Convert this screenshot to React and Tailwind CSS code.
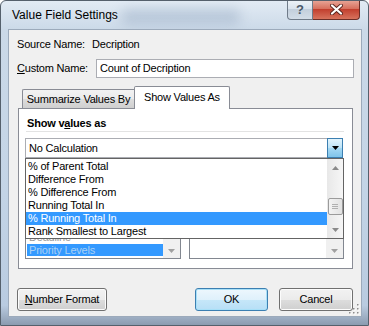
import React from 'react'

const FONT = { fontFamily: '"Liberation Sans", Arial, sans-serif' }

const items = [
  '% of Parent Total',
  'Difference From',
  '% Difference From',
  'Running Total In',
  '% Running Total In',
  'Rank Smallest to Largest',
]

function Tri({ dir = 'down', color = '#000', w = 7, h = 4 }) {
  const d = dir === 'down' ? `M0 0 L${w} 0 L${w / 2} ${h} Z` : `M0 ${h} L${w} ${h} L${w / 2} 0 Z`
  return (
    <svg width={w} height={h} viewBox={`0 0 ${w} ${h}`}>
      <path d={d} fill={color} />
    </svg>
  )
}

function Button({ children, primary, className = '' }) {
  return (
    <div
      className={`h-[23px] flex items-center justify-center rounded-[3px] border text-[11px] tracking-[-0.2px] text-black ${
        primary
          ? 'border-[#3c7fb1] bg-[linear-gradient(180deg,#edf7fd_0%,#dff1fb_50%,#c6e7f9_51%,#b7dff6_100%)] shadow-[inset_0_0_0_1px_#a8e0f8]'
          : 'border-[#707070] bg-[linear-gradient(180deg,#f2f2f2_0%,#ebebeb_50%,#dddddd_51%,#cfcfcf_100%)] shadow-[inset_0_0_0_1px_#fcfcfc]'
      } ${className}`}
    >
      {children}
    </div>
  )
}

export default function App() {
  return (
    <div
      style={FONT}
      className="relative w-[369px] h-[326px] overflow-hidden flex flex-col border border-[#55606c] rounded-t-[6px] bg-[linear-gradient(180deg,#e2ebf4_0%,#cbd9e8_9%,#c3d4e6_60%,#b9cbe0_94%,#8b9bb0_100%)]"
    >
      {/* Title bar */}
      <div className="relative h-[28px] flex items-center pl-[11px] shrink-0">
        <div className="absolute left-[120px] top-[8px] w-[120px] h-[16px] rounded-full bg-[#8fa3bd] opacity-40 blur-[6px]" />
        <span className="relative text-[12px] text-black">Value Field Settings</span>
        <div className="absolute top-[-1px] right-[8px] flex">
          <div className="w-[26px] h-[20px] border border-[#6f7b89] border-t-0 rounded-bl-[4px] bg-[linear-gradient(180deg,#eef3f8_0%,#dae3ed_45%,#c3cfdc_50%,#d3dde8_100%)] flex items-center justify-center">
            <span className="text-[13px] font-bold text-[#4a5868] leading-none">?</span>
          </div>
          <div className="w-[47px] h-[20px] border border-[#6b2e27] border-t-0 border-l-0 rounded-br-[4px] bg-[linear-gradient(180deg,#e9a99b_0%,#d7715f_45%,#c2402f_50%,#d7735d_100%)] flex items-center justify-center">
            <svg width="13" height="11" viewBox="0 0 13 11">
              <path d="M2 1.5 L11 9.5 M11 1.5 L2 9.5" stroke="#5a2620" strokeWidth="4" strokeLinecap="round" />
              <path d="M2 1.5 L11 9.5 M11 1.5 L2 9.5" stroke="#ffffff" strokeWidth="2.2" strokeLinecap="round" />
            </svg>
          </div>
        </div>
      </div>

      {/* Client area */}
      <div className="relative ml-[7px] w-[354px] h-[288px] shrink-0 bg-[#f0f0f0] border border-[#9caabb] text-[11px] tracking-[-0.2px] text-black">
        <div className="flex items-center h-[14px] mt-[7px] pl-[8px]">
          <span className="w-[75px]">Source Name:</span>
          <span>Decription</span>
        </div>

        <div className="flex items-center h-[19px] mt-[8px] pl-[8px]">
          <span className="w-[79px]">
            <u>C</u>ustom Name:
          </span>
          <div className="w-[258px] h-[19px] border border-[#abadb3] bg-white flex items-center pl-[3px]">
            Count of Decription
          </div>
        </div>

        {/* Tabs */}
        <div className="flex items-end h-[22px] mt-[8px] pl-[13px]">
          <div className="w-[112px] h-[19px] border border-[#898c95] border-b-0 border-r-0 rounded-tl-[2px] bg-[linear-gradient(180deg,#f2f2f2_0%,#ebebeb_50%,#dddddd_51%,#cfcfcf_100%)] flex items-center justify-center">
            Summarize Values By
          </div>
          <div className="relative z-10 w-[96px] h-[23px] -mb-[1px] border border-[#898c95] border-b-0 rounded-t-[2px] bg-white flex items-center justify-center pb-[1px]">
            Show Values As
          </div>
        </div>

        {/* Panel */}
        <div className="relative ml-[9px] w-[335px] h-[161px] border border-[#898c95] bg-white">
          <div className="h-[14px] mt-[7px] pl-[8px] flex items-center font-bold">
            Show v<u>a</u>lues as
          </div>
          <div className="ml-[7px] mt-[1px] w-[318px] h-px bg-[#e3e3e3]" />

          <div className="ml-[6px] mt-[6px] w-[318px] h-[20px] border border-[#abadb3] bg-white flex items-center">
            <span className="flex-1 pl-[3px]">No Calculation</span>
            <div className="w-[16px] h-[20px] -mr-px border border-[#3c7fb1] bg-[linear-gradient(180deg,#e3f4fc_0%,#bde4f8_50%,#a6d9f4_51%,#7fc4ea_100%)] flex items-center justify-center">
              <Tri color="#000" w={7} h={4} />
            </div>
          </div>

          {/* Base field / item lists (covered by the open dropdown) */}
          <div className="flex mt-[23px] ml-[6px]">
            <div className="w-[156px] h-[78px] border border-[#828790] bg-white flex">
              <div className="flex-1 flex flex-col justify-end pb-[2px] pl-px">
                <div className="h-[13px] leading-[13px] pl-[2px] text-[#9a9a9a]">Deadline</div>
                <div className="h-[12px] leading-[12px] pl-[2px] bg-[#3399ff] text-[#a9d0f5]">Priority Levels</div>
              </div>
              <div className="w-[17px] bg-[#f0f0f0] flex flex-col justify-end items-center pb-[5px]">
                <Tri color="#a0a0a0" w={7} h={4} />
              </div>
            </div>
            <div className="ml-[8px] w-[155px] h-[78px] border border-[#828790] bg-white flex">
              <div className="flex-1" />
              <div className="w-[17px] bg-[#f0f0f0] flex flex-col justify-end items-center pb-[5px]">
                <Tri color="#a0a0a0" w={7} h={4} />
              </div>
            </div>
          </div>

          {/* Open dropdown list */}
          <div className="absolute left-[6px] top-[49px] w-[319px] h-[81px] pt-px border border-[#646464] bg-white flex z-20">
            <div className="flex-1 flex flex-col">
              {items.map(item => (
                <div
                  key={item}
                  className={`h-[13px] leading-[13px] pl-[2px] whitespace-nowrap ${
                    item === '% Running Total In' ? 'bg-[#3399ff] text-white' : 'text-black'
                  }`}
                >
                  {item}
                </div>
              ))}
            </div>
            <div className="w-[16px] -mt-px bg-[linear-gradient(90deg,#e8e8e8,#f6f6f6)] flex flex-col items-center">
              <div className="h-[17px] flex items-center justify-center">
                <Tri dir="up" color="#8a8a8a" w={7} h={4} />
              </div>
              <div className="mt-[22px] w-[15px] h-[17px] rounded-[2px] border border-[#9b9b9b] bg-[linear-gradient(90deg,#f3f3f3,#e2e2e2)] flex flex-col items-center justify-center gap-[1px]">
                <div className="w-[6px] h-px bg-[#b0b0b0]" />
                <div className="w-[6px] h-px bg-[#b0b0b0]" />
                <div className="w-[6px] h-px bg-[#b0b0b0]" />
              </div>
              <div className="flex-1" />
              <div className="h-[17px] flex items-center justify-center">
                <Tri color="#8a8a8a" w={7} h={4} />
              </div>
            </div>
          </div>
        </div>

        {/* Buttons */}
        <div className="flex mt-[19px] pl-[8px]">
          <Button className="w-[90px]">
            <span>
              <u>N</u>umber Format
            </span>
          </Button>
          <Button primary className="ml-[88px] w-[73px]">
            OK
          </Button>
          <Button className="ml-[11px] w-[74px]">Cancel</Button>
        </div>

        {/* Resize grip */}
        <svg className="absolute right-[1px] bottom-[1px]" width="11" height="11" viewBox="0 0 11 11">
          {[
            [9, 1], [9, 5], [5, 5], [9, 9], [5, 9], [1, 9],
          ].map(([x, y]) => (
            <g key={`${x}-${y}`}>
              <rect x={x} y={y} width="1.5" height="1.5" fill="#ffffff" />
              <rect x={x - 1} y={y - 1} width="1.5" height="1.5" fill="#8c8c8c" />
            </g>
          ))}
        </svg>
      </div>
    </div>
  )
}
